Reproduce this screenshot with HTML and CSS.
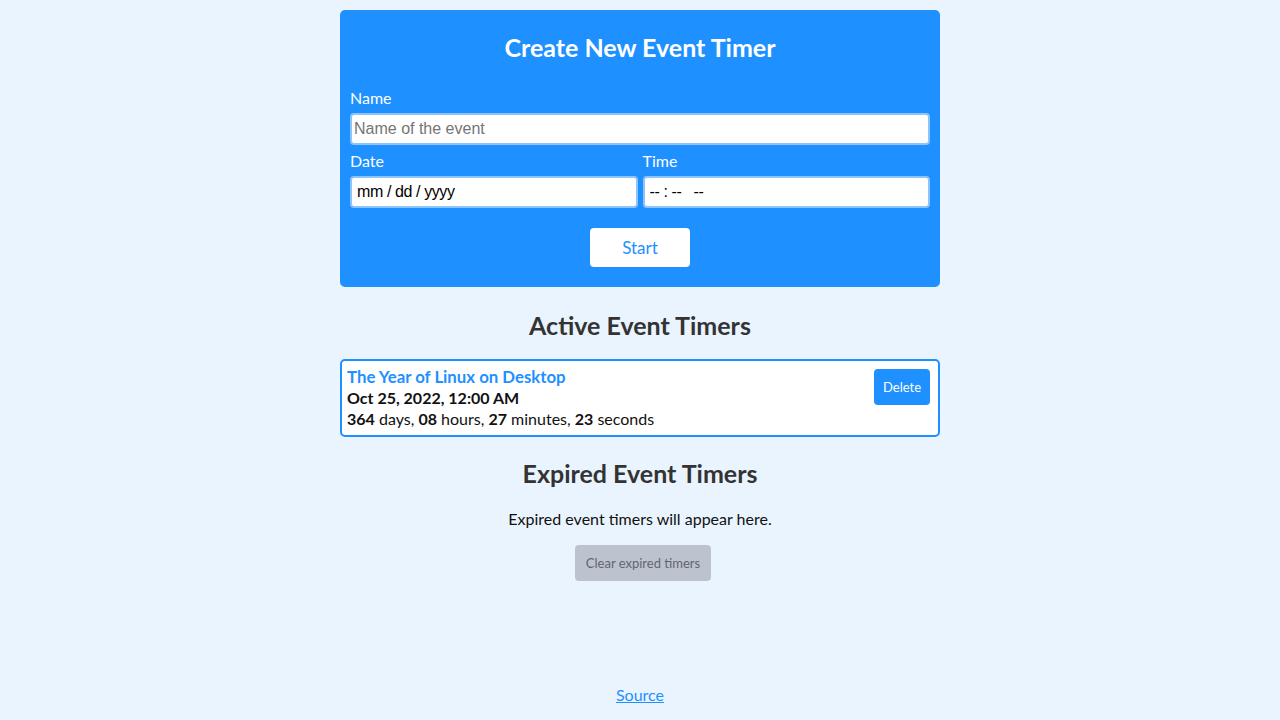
FILE: index.html
```html
<!DOCTYPE html>
<html lang="en">
<head>
<meta charset="utf-8">
<title>Event Timers</title>
<link rel="stylesheet" href="styles.css">
</head>
<body>
<main class="page">
  <form class="create">
    <h1 class="create-title">Create New Event Timer</h1>
    <label class="field">
      <span class="label">Name</span>
      <input class="input" type="text" placeholder="Name of the event">
    </label>
    <div class="row">
      <label class="field">
        <span class="label">Date</span>
        <input class="input input-dt" type="text" placeholder="mm / dd / yyyy">
      </label>
      <label class="field">
        <span class="label">Time</span>
        <input class="input input-dt" type="text" placeholder="-- : --   --">
      </label>
    </div>
    <div class="actions">
      <button class="start" type="button">Start</button>
    </div>
  </form>

  <h2 class="section-title">Active Event Timers</h2>
  <div class="timer">
    <div class="timer-info">
      <div class="timer-name">The Year of Linux on Desktop</div>
      <div class="timer-date">Oct 25, 2022, 12:00 AM</div>
      <div class="timer-left"><b>364</b> days, <b>08</b> hours, <b>27</b> minutes, <b>23</b> seconds</div>
    </div>
    <button class="delete" type="button">Delete</button>
  </div>

  <h2 class="section-title expired-title">Expired Event Timers</h2>
  <p class="empty">Expired event timers will appear here.</p>
  <div class="clear-wrap">
    <button class="clear" type="button" disabled>Clear expired timers</button>
  </div>
</main>
<footer class="footer">
  <a class="source" href="#">Source</a>
</footer>
</body>
</html>
```
FILE: styles.css
```css
* { box-sizing: border-box; }
html, body { margin: 0; padding: 0; }
body {
  background: #eaf4ff;
  font-family: "Lato", "Open Sans", sans-serif;
  font-size: 16px;
  color: #111;
  min-height: 100vh;
  display: flex;
  flex-direction: column;
  align-items: center;
}
.page {
  width: 600px;
  margin-top: 10px;
  display: flex;
  flex-direction: column;
}
.create {
  background: #1e90ff;
  border-radius: 5px;
  padding: 16px 10px 20px;
  color: #fff;
  display: flex;
  flex-direction: column;
}
.create-title {
  margin: 0 0 19px;
  text-align: center;
  font-size: 25px;
  line-height: 42px;
  font-weight: 700;
}
.field {
  display: flex;
  flex-direction: column;
  flex: 1;
  min-width: 0;
}
.label {
  font-size: 16px;
  line-height: 22px;
  margin-bottom: 4px;
}
.row {
  display: flex;
  gap: 5px;
  margin-top: 5px;
}
.input {
  height: 32px;
  width: 100%;
  border: 2px solid #8cc4fb;
  border-radius: 4px;
  padding: 0 2px;
  font-family: "Liberation Sans", Arial, sans-serif;
  font-size: 16px;
  color: #000;
  background: #fff;
  outline: none;
}
.input::placeholder { color: #757575; }
.input-dt { padding: 0 5px; letter-spacing: -0.4px; }
.input-dt::placeholder { color: #000; }
.actions {
  display: flex;
  justify-content: center;
  margin-top: 20px;
}
.start {
  width: 100px;
  height: 39px;
  border: none;
  border-radius: 4px;
  background: #fff;
  color: #1e90ff;
  font-family: inherit;
  font-size: 17px;
}
.section-title {
  margin: 22px 0 18px;
  text-align: center;
  font-size: 25px;
  line-height: 32px;
  font-weight: 700;
  color: #333;
}
.timer {
  background: #fff;
  border: 2px solid #1e90ff;
  border-radius: 5px;
  padding: 5px 8px 6px 5px;
  display: flex;
  justify-content: space-between;
  align-items: flex-start;
}
.timer-info { line-height: 21px; }
.timer-name { color: #1e90ff; font-weight: 700; font-size: 16.8px; }
.timer-date { font-weight: 700; }
.delete {
  margin-top: 3px;
  width: 56px;
  height: 36px;
  border: none;
  border-radius: 4px;
  background: #1e90ff;
  color: #fff;
  font-family: inherit;
  font-size: 13px;
}
.expired-title { margin-top: 20px; margin-bottom: 18px; }
.empty {
  margin: 0;
  text-align: center;
  line-height: 24px;
}
.clear-wrap {
  display: flex;
  justify-content: center;
  margin-top: 14px;
  padding-left: 6px;
}
.clear {
  width: 136px;
  height: 36px;
  border: none;
  border-radius: 4px;
  background: #bcc3cf;
  color: #5f6670;
  font-family: inherit;
  font-size: 13px;
}
.footer {
  margin-top: auto;
  padding-bottom: 16px;
}
.source {
  color: #1e90ff;
  text-decoration: underline;
  font-size: 16px;
}
```
